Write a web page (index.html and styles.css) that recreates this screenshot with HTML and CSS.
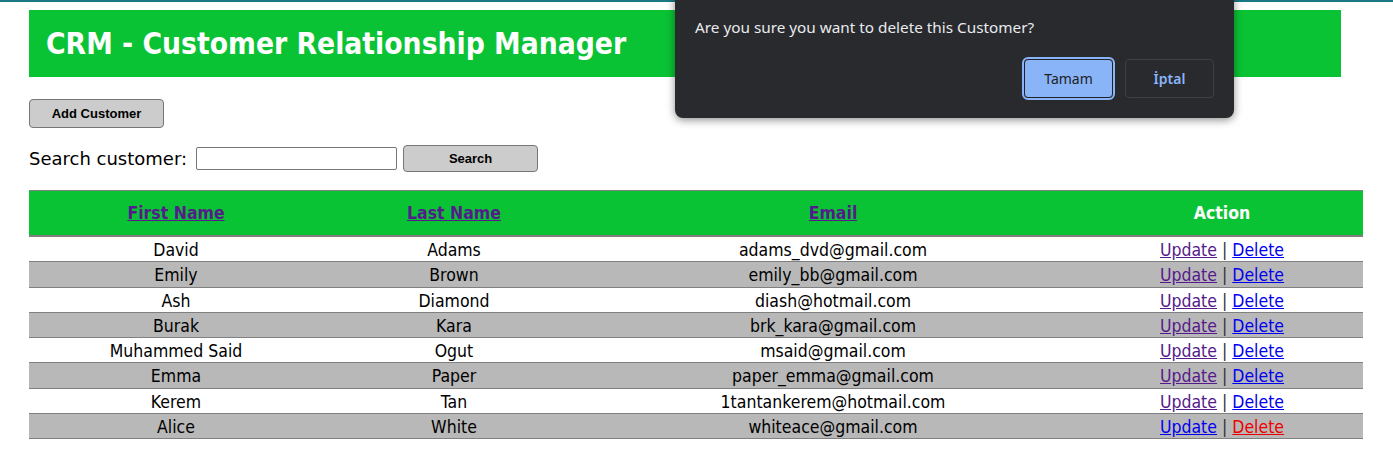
FILE: index.html
```html
<!DOCTYPE html>
<html lang="en">
<head>
<meta charset="utf-8">
<title>CRM - Customer Relationship Manager</title>
<link rel="stylesheet" href="styles.css">
</head>
<body>
<div class="topline"></div>
<div class="page">
  <header class="banner">
    <h1>CRM - Customer Relationship Manager</h1>
  </header>

  <div class="actions">
    <button class="btn btn-add" type="button">Add Customer</button>
  </div>

  <form class="search">
    <label for="q">Search customer:</label>
    <input id="q" type="text" class="search-input">
    <button class="btn btn-search" type="button">Search</button>
  </form>

  <table class="grid">
    <colgroup>
      <col class="c1"><col class="c2"><col class="c3"><col class="c4">
    </colgroup>
    <thead>
      <tr>
        <th><a href="#" class="visited">First Name</a></th>
        <th><a href="#" class="visited">Last Name</a></th>
        <th><a href="#" class="visited">Email</a></th>
        <th>Action</th>
      </tr>
    </thead>
    <tbody>
      <tr><td>David</td><td>Adams</td><td>adams_dvd@gmail.com</td><td><a href="#" class="visited">Update</a> <span class="sep">|</span> <a href="#" class="link">Delete</a></td></tr>
      <tr><td>Emily</td><td>Brown</td><td>emily_bb@gmail.com</td><td><a href="#" class="visited">Update</a> <span class="sep">|</span> <a href="#" class="link">Delete</a></td></tr>
      <tr><td>Ash</td><td>Diamond</td><td>diash@hotmail.com</td><td><a href="#" class="visited">Update</a> <span class="sep">|</span> <a href="#" class="link">Delete</a></td></tr>
      <tr><td>Burak</td><td>Kara</td><td>brk_kara@gmail.com</td><td><a href="#" class="visited">Update</a> <span class="sep">|</span> <a href="#" class="link">Delete</a></td></tr>
      <tr><td>Muhammed Said</td><td>Ogut</td><td>msaid@gmail.com</td><td><a href="#" class="visited">Update</a> <span class="sep">|</span> <a href="#" class="link">Delete</a></td></tr>
      <tr><td>Emma</td><td>Paper</td><td>paper_emma@gmail.com</td><td><a href="#" class="visited">Update</a> <span class="sep">|</span> <a href="#" class="link">Delete</a></td></tr>
      <tr><td>Kerem</td><td>Tan</td><td>1tantankerem@hotmail.com</td><td><a href="#" class="visited">Update</a> <span class="sep">|</span> <a href="#" class="link">Delete</a></td></tr>
      <tr><td>Alice</td><td>White</td><td>whiteace@gmail.com</td><td><a href="#" class="link">Update</a> <span class="sep">|</span> <a href="#" class="active">Delete</a></td></tr>
    </tbody>
  </table>
</div>

<div class="dialog" role="dialog">
  <p class="dialog-msg">Are you sure you want to delete this Customer?</p>
  <div class="dialog-buttons">
    <button class="dbtn dbtn-ok" type="button">Tamam</button>
    <button class="dbtn dbtn-cancel" type="button">İptal</button>
  </div>
</div>
</body>
</html>
```

FILE: styles.css
```css
html, body {
  margin: 0;
  padding: 0;
  background: #ffffff;
}

body {
  font-family: "DejaVu Sans Condensed", "DejaVu Sans", sans-serif;
  color: #000;
  position: relative;
  height: 461px;
  overflow: hidden;
}

.topline {
  height: 2px;
  background: #1a7882;
}

.page {
  padding: 8px 30px 0 29px;
}

.banner {
  width: 1312px;
  height: 67px;
  background: #0ac334;
  display: flex;
  align-items: center;
  padding-left: 17px;
  box-sizing: border-box;
}

.banner h1 {
  margin: 0;
  color: #fff;
  font-family: "DejaVu Sans Condensed", "DejaVu Sans", sans-serif;
  font-weight: bold;
  font-size: 29.7px;
}

.actions {
  padding-top: 22px;
}

.btn {
  background: #cccccc;
  border: 1px solid #777;
  border-radius: 4px;
  font-family: "Liberation Sans", Arial, sans-serif;
  font-weight: bold;
  font-size: 13px;
  color: #000;
  padding: 0;
  cursor: pointer;
}

.btn-add {
  width: 135px;
  height: 29px;
  display: block;
}

.search {
  display: flex;
  align-items: center;
  margin-top: 16px;
  height: 28px;
}

.search label {
  font-size: 18px;
  font-family: "DejaVu Sans", sans-serif;
  margin-right: 9px;
}

.search-input {
  width: 201px;
  height: 23px;
  box-sizing: border-box;
  border: 1px solid #767676;
  border-radius: 2px;
  margin: 0 6px 0 0;
  padding: 0;
}

.btn-search {
  width: 135px;
  height: 27px;
}

.grid {
  margin-top: 18px;
  width: 1334px;
  border-collapse: collapse;
  table-layout: fixed;
  font-size: 17.5px;
}

.c1 { width: 294px; }
.c2 { width: 262px; }
.c3 { width: 496px; }
.c4 { width: 282px; }

.grid thead tr {
  background: #0ac334;
  border-top: 1px solid #808080;
  border-bottom: 2px solid #808080;
}

.grid th {
  height: 44px;
  padding: 0;
  color: #fff;
  font-weight: bold;
  font-size: 17.5px;
}

.grid td {
  text-align: center;
  padding: 2px 0 0;
  height: 22.3px;
  line-height: 22.3px;
}

.grid tbody tr {
  border-bottom: 1px solid #808080;
}

.grid tbody tr:nth-child(even) {
  background: #b8b8b8;
}

a.visited { color: #551a8b; }
a.link { color: #0000ee; }
a.active { color: #ee0000; }

.sep { color: #333; }

.dialog {
  position: absolute;
  left: 675px;
  top: -10px;
  width: 559px;
  height: 128px;
  box-sizing: border-box;
  background: #292a2d;
  border-radius: 8px;
  box-shadow: 0 2px 8px rgba(0, 0, 0, 0.45);
  padding: 0 20px;
  font-family: "Noto Sans", "Open Sans", sans-serif;
  color: #e8eaed;
}

.dialog-msg {
  margin: 26px 0 0;
  font-size: 15.3px;
  line-height: 22px;
}

.dialog-buttons {
  display: flex;
  justify-content: flex-end;
  gap: 12px;
  margin-top: 21px;
}

.dbtn {
  width: 89px;
  height: 39px;
  border-radius: 4px;
  font-family: "Noto Sans", "Open Sans", sans-serif;
  font-size: 14px;
  padding: 0;
}

.dbtn-ok {
  background: #8ab4f8;
  color: #202124;
  border: 1px solid #202124;
  outline: 2px solid #8ab4f8;
  outline-offset: 0;
}

.dbtn-cancel {
  background: #292a2d;
  color: #8ab4f8;
  border: 1px solid #3c4043;
  font-weight: 600;
}
```
